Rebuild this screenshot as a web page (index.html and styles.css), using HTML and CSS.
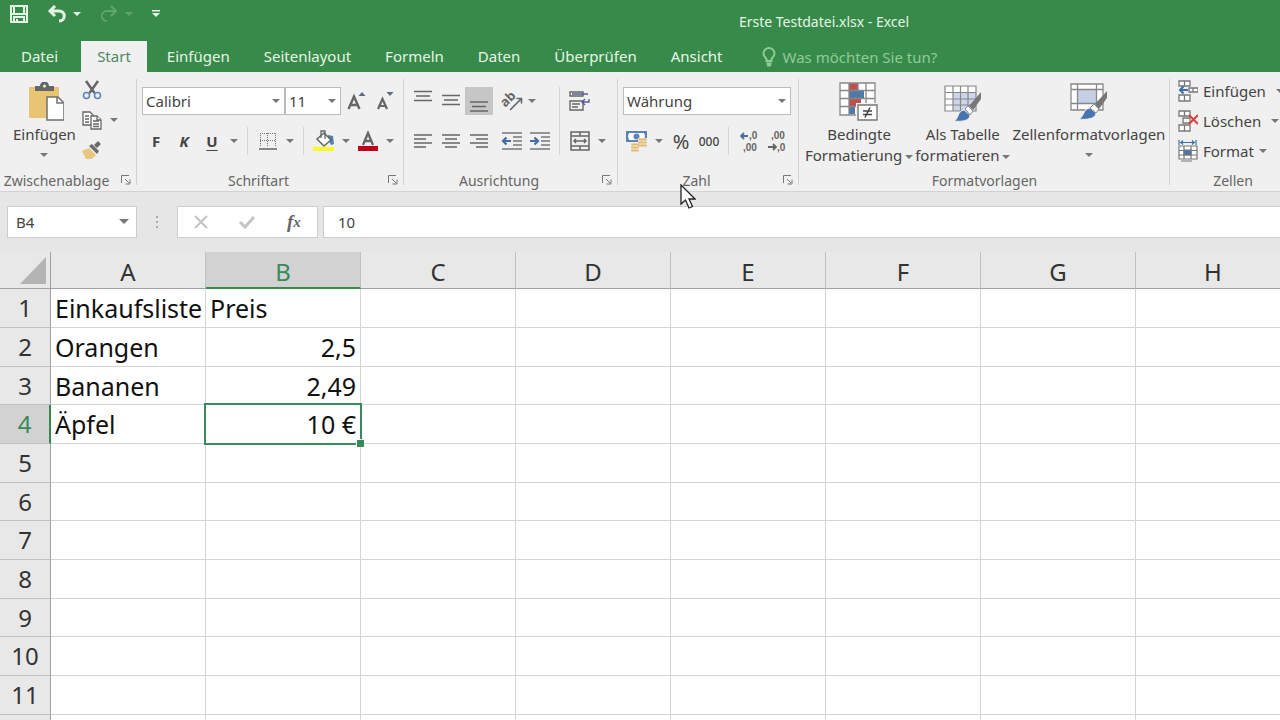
FILE: index.html
```
<!DOCTYPE html>
<html lang="de">
<head>
  <meta charset="UTF-8">
  <meta name="viewport" content="width=device-width, initial-scale=1.0">
  <title>Erste Testdatei.xlsx - Excel</title>
  <link rel="stylesheet" href="styles.css">
</head>
<body>
  <div class="app">
    <header class="titlebar">
      <div class="quick-access">
        <button class="qa-btn" aria-label="Speichern">
          <svg width="20" height="20" viewBox="0 0 20 20" fill="none" stroke="#e6f6e4" stroke-width="2"><path d="M2 2h16v16H2zM5 2v8M15 2v8M5 18v-5h10v5M8 15v3M2 10h16"/></svg>
        </button>
        <button class="qa-btn undo" aria-label="Rückgängig">
          <svg width="20" height="18" viewBox="0 0 20 18" fill="none" stroke="#e6f6e4" stroke-width="3"><path d="M8 1L3 6l5 5M3 6h9c7 0 7 10 0 10"/></svg>
          <span class="arrow"></span>
        </button>
        <button class="qa-btn redo" aria-label="Wiederholen" disabled>
          <svg width="20" height="18" viewBox="0 0 20 18" fill="none" stroke="#5fa56c" stroke-width="2"><path d="M12 1l5 5-5 5M17 6H8c-7 0-7 10 0 10"/></svg>
          <span class="arrow"></span>
        </button>
        <button class="qa-btn" aria-label="Symbolleiste anpassen">
          <svg width="10" height="10" viewBox="0 0 10 10"><path d="M1 1h8v1.500H1zM1 4h8L5 8z" fill="#e6f6e4"/></svg>
        </button>
      </div>
      <h1 class="doc-title">Erste Testdatei.xlsx - Excel</h1>
    </header>

    <nav class="tabs">
      <a class="tab file" href="#">Datei</a>
      <a class="tab active" href="#">Start</a>
      <a class="tab" href="#">Einfügen</a>
      <a class="tab" href="#">Seitenlayout</a>
      <a class="tab" href="#">Formeln</a>
      <a class="tab" href="#">Daten</a>
      <a class="tab" href="#">Überprüfen</a>
      <a class="tab" href="#">Ansicht</a>
      <button class="tell-me">
        <svg width="14" height="20" viewBox="0 0 14 20" fill="none" stroke="#8fcb95" stroke-width="2"><path d="M4.500 14v-2C3 10 1.500 9 1.500 6.500a5.500 5.500 0 0 1 11 0C12.500 9 11 10 9.500 12v2zM4.500 16.500h5M5 18.500h4"/></svg>
        Was möchten Sie tun?
      </button>
    </nav>

    <section class="ribbon">
      <!-- Zwischenablage -->
      <div class="group clipboard">
        <div class="group-body large">
          <button class="big-btn paste">
            <svg width="40" height="40" viewBox="0 0 40 40"><path d="M5 5h30v31H5z" fill="#e7c573"/><path d="M11 9V4h5a4.500 4.500 0 0 1 9 0h5v5z" fill="#666"/><circle cx="20.500" cy="4" r="1.500" fill="#eee"/><path d="M23 15h11l6 6v17H23z" fill="#fff" stroke="#707070" stroke-width="1.500"/><path d="M33 15v6h6" fill="none" stroke="#707070" stroke-width="1.500"/></svg>
            <span>Einfügen</span>
            <span class="arrow"></span>
          </button>
          <div class="small-stack">
            <button class="icon-btn" aria-label="Ausschneiden">
              <svg width="20" height="20" viewBox="0 0 20 20" fill="none"><path d="M4 1l8.500 12M16 1L7.500 13" stroke="#666" stroke-width="2.500"/><circle cx="4.500" cy="15.500" r="3" stroke="#5b83b5" stroke-width="1.500"/><circle cx="15.500" cy="15.500" r="3" stroke="#5b83b5" stroke-width="1.500"/></svg>
            </button>
            <div class="row">
              <button class="icon-btn" aria-label="Kopieren">
                <svg width="22" height="20" viewBox="0 0 22 20" fill="#fff" stroke="#666" stroke-width="1.300"><path d="M2 2h7l3 3v10H2z"/><path d="M4 6h4M4 9h4M4 12h4"/><path d="M10 6h6l4 4v9H10z"/><path d="M12 11h6M12 14h6M12 16.500h6M16 6v4h4"/></svg>
              </button>
              <button class="drop" aria-label="Kopieroptionen"><span class="arrow"></span></button>
            </div>
            <button class="icon-btn" aria-label="Format übertragen">
              <svg width="22" height="20" viewBox="0 0 22 20"><path d="M1 11l7-3 7 7-4 4H5z" fill="#e5c77d"/><path d="M8 6l3-2 7 7-2 3zM13 5l4-4 3 3-4 4z" fill="#6b6b6b"/></svg>
            </button>
          </div>
        </div>
        <div class="caption"><span>Zwischenablage</span>
          <button class="launcher" aria-label="Zwischenablage öffnen"><svg width="10" height="10" viewBox="0 0 10 10" fill="none" stroke="#777"><path d="M.5 8V.5H8M4 4l4 4M9 4.500V9H4.500"/></svg></button></div>
      </div>

      <!-- Schriftart -->
      <div class="group font">
        <div class="group-body">
          <div class="row">
            <div class="combo font-name"><select aria-label="Schriftart"><option>Calibri</option></select></div>
            <div class="combo font-size"><select aria-label="Schriftgrad"><option>11</option></select></div>
            <button class="icon-btn" aria-label="Schrift vergrößern">
              <svg width="20" height="20" viewBox="0 0 20 20"><path d="M1.500 18L7 5.500 12.500 18M4 14h6.500" fill="none" stroke="#666" stroke-width="2.400"/><path d="M11.500 5l3.500-4 3.500 4z" fill="#5b6b85"/></svg>
            </button>
            <button class="icon-btn" aria-label="Schrift verkleinern">
              <svg width="20" height="20" viewBox="0 0 20 20"><path d="M3 18L7.500 8 12 18M4.500 15h6" fill="none" stroke="#666" stroke-width="2.200"/><path d="M11.500 1l3.500 4 3.500-4z" fill="#5b6b85"/></svg>
            </button>
          </div>
          <div class="row">
            <button class="icon-btn bold">F</button>
            <button class="icon-btn italic">K</button>
            <button class="icon-btn underline">U</button>
            <button class="drop" aria-label="Unterstreichen"><span class="arrow"></span></button>
            <i class="sep"></i>
            <button class="icon-btn" aria-label="Rahmen">
              <svg width="20" height="20" viewBox="0 0 20 20" fill="none" stroke="#777"><path d="M2 2.500h16M2 9.500h16M2.500 2v14M9.500 2v14M17.500 2v14" stroke-dasharray="1 1"/><path d="M1 18h18" stroke="#666" stroke-width="1.500"/></svg>
            </button>
            <button class="drop" aria-label="Rahmenarten"><span class="arrow"></span></button>
            <i class="sep"></i>
            <button class="icon-btn" aria-label="Füllfarbe">
              <svg width="22" height="22" viewBox="0 0 22 22"><path d="M15 5l5 1 1 8-3 1-3-6z" fill="#5680aa"/><path d="M4 9l7-6 7 7-7 6z" fill="#fff" stroke="#666" stroke-width="1.500"/><path d="M8 8V1h4v8" fill="none" stroke="#666" stroke-width="1.300"/><path d="M0 17h21v4H0z" fill="#f8fb25"/></svg>
            </button>
            <button class="drop" aria-label="Füllfarben"><span class="arrow"></span></button>
            <button class="icon-btn" aria-label="Schriftfarbe">
              <svg width="22" height="22" viewBox="0 0 22 22"><path d="M6 15L11 3l5 12M8 11h6" fill="none" stroke="#666" stroke-width="2.300"/><path d="M1 16h20v5H1z" fill="#c00018"/></svg>
            </button>
            <button class="drop" aria-label="Schriftfarben"><span class="arrow"></span></button>
          </div>
        </div>
        <div class="caption"><span>Schriftart</span>
          <button class="launcher" aria-label="Schriftart öffnen"><svg width="10" height="10" viewBox="0 0 10 10" fill="none" stroke="#777"><path d="M.5 8V.5H8M4 4l4 4M9 4.500V9H4.500"/></svg></button></div>
      </div>

      <!-- Ausrichtung -->
      <div class="group align">
        <div class="group-body split">
          <div class="rows">
            <div class="row">
              <button class="icon-btn" aria-label="Oben ausrichten"><svg width="20" height="22" viewBox="0 0 20 22" stroke="#666" stroke-width="1.500"><path d="M1 1.500h18M3 6h14M1 10.500h18"/></svg></button>
              <button class="icon-btn" aria-label="Zentriert ausrichten"><svg width="20" height="22" viewBox="0 0 20 22" stroke="#666" stroke-width="1.500"><path d="M1 5.500h18M3 10h14M1 14.500h18"/></svg></button>
              <button class="icon-btn pressed" aria-label="Unten ausrichten"><svg width="20" height="22" viewBox="0 0 20 22" stroke="#666" stroke-width="1.500"><path d="M1 12h18M3 16.500h14M1 21h18"/></svg></button>
              <button class="icon-btn spaced" aria-label="Ausrichtung">
                <svg class="ab" width="24" height="22" viewBox="0 0 24 22"><text transform="translate(11 12) rotate(-45)" text-anchor="middle" class="ab-text">ab</text><path d="M10 20L21 9M16.500 8.500H21.500V13.500" fill="none" stroke="#666" stroke-width="1.600"/></svg>
              </button>
              <button class="drop narrow" aria-label="Drehrichtung"><span class="arrow"></span></button>
            </div>
            <div class="row">
              <button class="icon-btn" aria-label="Linksbündig"><svg width="20" height="16" viewBox="0 0 20 16" stroke="#666" stroke-width="1.500"><path d="M1 2h18M1 6h12M1 10h18M1 14h12"/></svg></button>
              <button class="icon-btn" aria-label="Zentriert"><svg width="20" height="16" viewBox="0 0 20 16" stroke="#666" stroke-width="1.500"><path d="M1 2h18M4 6h12M1 10h18M4 14h12"/></svg></button>
              <button class="icon-btn" aria-label="Rechtsbündig"><svg width="20" height="16" viewBox="0 0 20 16" stroke="#666" stroke-width="1.500"><path d="M1 2h18M7 6h12M1 10h18M7 14h12"/></svg></button>
              <button class="icon-btn spaced" aria-label="Einzug verkleinern"><svg width="22" height="18" viewBox="0 0 22 18" fill="none" stroke="#777" stroke-width="1.500"><path d="M1 1h20M12 5h9M12 9h9M12 13h9M1 17h20"/><path d="M10 9H2M5.500 5.500L2 9l3.500 3.500" stroke="#3f6ea5" stroke-width="2.200"/></svg></button>
              <button class="icon-btn" aria-label="Einzug vergrößern"><svg width="22" height="18" viewBox="0 0 22 18" fill="none" stroke="#777" stroke-width="1.500"><path d="M1 1h20M12 5h9M12 9h9M12 13h9M1 17h20"/><path d="M1 9h8M5.500 5.500L9 9l-3.500 3.500" stroke="#3f6ea5" stroke-width="2.200"/></svg></button>
            </div>
          </div>
          <i class="sep tall"></i>
          <div class="rows">
            <div class="row">
              <button class="icon-btn" aria-label="Textumbruch"><svg width="22" height="22" viewBox="0 0 22 22" fill="none" stroke="#666" stroke-width="1.400"><path d="M1 2h13v4H1zM1 11h13v9H1zM3 14h8M3 17h6"/><path d="M3 4h16M20 9v3h-7M16 9l-3 3 3 3" stroke="#5a5aa0"/></svg></button>
            </div>
            <div class="row">
              <button class="icon-btn" aria-label="Verbinden und zentrieren"><svg width="20" height="20" viewBox="0 0 20 20" fill="none" stroke="#666" stroke-width="1.500"><path d="M1 1h18v18H1zM1 5h18M1 15h18M10 1v4M10 15v4M4 10h12M6 8l-2 2 2 2M14 8l2 2-2 2"/></svg></button>
              <button class="drop" aria-label="Verbindungsarten"><span class="arrow"></span></button>
            </div>
          </div>
        </div>
        <div class="caption"><span>Ausrichtung</span>
          <button class="launcher" aria-label="Ausrichtung öffnen"><svg width="10" height="10" viewBox="0 0 10 10" fill="none" stroke="#777"><path d="M.5 8V.5H8M4 4l4 4M9 4.500V9H4.500"/></svg></button></div>
      </div>

      <!-- Zahl -->
      <div class="group number">
        <div class="group-body">
          <div class="row">
            <div class="combo format"><select aria-label="Zahlenformat"><option>Währung</option></select></div>
          </div>
          <div class="row">
            <button class="icon-btn" aria-label="Buchhaltungsformat"><svg width="22" height="22" viewBox="0 0 22 22"><path d="M0 1h21v11H0z" fill="#5b83b5"/><path d="M3 3h15l1 3-1 4H3L2 6z" fill="#fff"/><circle cx="10.500" cy="6.500" r="3" fill="#5b83b5"/><path d="M12 8h9v10h-9zM5 13h8v8H5z" fill="#f0f0f0"/><path d="M13 9.500h7M13 12.500h7M13 15.500h7M6 14.500h6M6 17.500h6M6 20.500h6" stroke="#dfba6b" stroke-width="2" stroke-linecap="round"/></svg></button>
            <button class="drop" aria-label="Währungen"><span class="arrow"></span></button>
            <button class="icon-btn percent">%</button>
            <button class="icon-btn thousand">000</button>
            <i class="sep"></i>
            <button class="icon-btn" aria-label="Dezimalstelle hinzufügen"><svg width="22" height="24" viewBox="0 0 22 24"><path d="M10 7H3M6 4L3 7l3 3" fill="none" stroke="#4c6c90" stroke-width="1.800"/><text class="dec" x="11" y="10">,0</text><text class="dec" x="5" y="22">,00</text></svg></button>
            <button class="icon-btn" aria-label="Dezimalstelle löschen"><svg width="22" height="24" viewBox="0 0 22 24"><path d="M2 18h8M7 15l3 3-3 3" fill="none" stroke="#666" stroke-width="1.800"/><text class="dec" x="5" y="10">,00</text><text class="dec" x="11" y="22">,0</text></svg></button>
          </div>
        </div>
        <div class="caption"><span>Zahl</span>
          <button class="launcher" aria-label="Zahl öffnen"><svg width="10" height="10" viewBox="0 0 10 10" fill="none" stroke="#777"><path d="M.5 8V.5H8M4 4l4 4M9 4.500V9H4.500"/></svg></button></div>
      </div>

      <!-- Formatvorlagen -->
      <div class="group styles">
        <div class="group-body large">
          <button class="big-btn">
            <svg width="40" height="40" viewBox="0 0 40 40"><path d="M1 1h35v32H1z" fill="#fff"/><path d="M10 1h9v7h-9zM10 17h12v7H10z" fill="#c0504d"/><path d="M10 9h15v7H10zM10 25h6v7h-6z" fill="#4f79a8"/><path d="M1 1h35v32H1zM1 8.500h35M1 16.500h35M1 24.500h35M10 1v32M19 1v8M27 1v32" fill="none" stroke="#888" stroke-width="1.300"/><path d="M17 21h23v19H17z" fill="#f0f0f0"/><path d="M19 23h19v15H19z" fill="#fff" stroke="#777" stroke-width="1.400"/><path d="M24 29h9M24 32.500h9M31 25.500l-5 10" stroke="#444" stroke-width="1.500"/></svg>
            <span>Bedingte</span>
            <span>Formatierung<span class="arrow"></span></span>
          </button>
          <button class="big-btn">
            <svg width="40" height="40" viewBox="0 0 40 40"><path d="M2 4h31v25H2z" fill="#fff"/><path d="M10 11h23v18H10z" fill="#cdd5ea"/><path d="M2 4h31v25H2zM2 10.500h31M2 17h31M2 23h31M10 4v25M17.500 4v25M25 4v25" fill="none" stroke="#888" stroke-width="1.200"/><path d="M11 39c5-2 3-10 10-11l6 5c0 6-9 7-16 6z" fill="#4675b0" stroke="#f0f0f0"/><path d="M22 27l3-3 5 5-3 4z" fill="#fff" stroke="#888"/><path d="M26 24l12-14v7l-8 11z" fill="#777"/></svg>
            <span>Als Tabelle</span>
            <span>formatieren<span class="arrow"></span></span>
          </button>
          <button class="big-btn">
            <svg width="40" height="40" viewBox="0 0 40 40"><path d="M2 2h32v26H2z" fill="#fff"/><path d="M9 8h18v13H9z" fill="#c5d0e4"/><path d="M2 2h32v26H2zM2 7.500h32M2 21.500h32M8.500 2v26M27.500 2v26" fill="none" stroke="#888" stroke-width="1.300"/><path d="M10 37c5-2 4-10 11-11l6 5c0 6-10 7-17 6z" fill="#4675b0" stroke="#f0f0f0"/><path d="M21 26l4-4 5 5-3 4z" fill="#fff" stroke="#888"/><path d="M26 22l12-13v7l-8 11z" fill="#777"/></svg>
            <span>Zellenformatvorlagen</span>
            <span class="arrow"></span>
          </button>
        </div>
        <div class="caption"><span>Formatvorlagen</span></div>
      </div>

      <!-- Zellen -->
      <div class="group cells">
        <div class="cell-actions">
          <div class="row">
            <button class="text-btn"><svg width="20" height="22" viewBox="0 0 20 22" fill="#fff" stroke="#777" stroke-width="1.300"><path d="M1 1h11v5H1zM6.500 1v5M1 15h11v6H1zM6.500 15v6M11 8h9v4h-9zM15 8v4"/><path d="M10 10H2M5.500 6.500L2 10l3.500 3.500" fill="none" stroke="#3f6ea5" stroke-width="2"/></svg>Einfügen</button>
            <button class="drop" aria-label="Einfügeoptionen"><span class="arrow"></span></button>
          </div>
          <div class="row">
            <button class="text-btn"><svg width="20" height="22" viewBox="0 0 20 22" fill="#fff" stroke="#777" stroke-width="1.300"><path d="M1 1h11v5H1zM6.500 1v5M1 15h11v6H1zM6.500 15v6M5 8h7v5H5z"/><path d="M11 5l9 9M20 5l-9 9" stroke="#d8423c" stroke-width="2"/></svg>Löschen</button>
            <button class="drop" aria-label="Löschoptionen"><span class="arrow"></span></button>
          </div>
          <div class="row">
            <button class="text-btn"><svg width="20" height="22" viewBox="0 0 20 22" fill="#fff" stroke="#777" stroke-width="1.200"><path d="M1 6h18v13H1zM1 10.500h18M1 15h18M6 6v13M13 6v13M3 21h11"/><path d="M6 10h7v5H6z" fill="#4675b0"/><path d="M1 0v5M18 0v5M2 2.500h15M5 .5l-2 2 2 2M14 .5l2 2-2 2" fill="none" stroke="#3f6ea5"/></svg>Format<span class="arrow"></span></button>
          </div>
        </div>
        <div class="caption"><span>Zellen</span></div>
      </div>
    </section>

    <div class="formula-bar">
      <div class="name-box">
        <input type="text" value="B4" aria-label="Namenfeld">
        <button class="drop" aria-label="Namen anzeigen"><span class="arrow wide"></span></button>
      </div>
      <div class="dots"><i></i><i></i><i></i></div>
      <div class="edit-buttons">
        <button aria-label="Abbrechen"><svg width="16" height="16" viewBox="0 0 16 16"><path d="M2 2l12 12M14 2L2 14" stroke="#c4c4c4" stroke-width="2"/></svg></button>
        <button aria-label="Eingeben"><svg width="18" height="16" viewBox="0 0 18 16"><path d="M2 8l5 5L16 3" fill="none" stroke="#c4c4c4" stroke-width="3"/></svg></button>
        <button class="fx" aria-label="Funktion einfügen">f<small>x</small></button>
      </div>
      <input class="formula" type="text" value="10" aria-label="Bearbeitungsleiste">
    </div>

    <main class="sheet">
      <table class="cells-table">
        <thead>
          <tr>
            <th class="corner"><svg width="26" height="27" viewBox="0 0 26 27"><path d="M26 0v27H0z" fill="#b4b4b4"/></svg></th>
            <th>A</th><th class="current">B</th><th>C</th><th>D</th><th>E</th><th>F</th><th>G</th><th>H</th>
          </tr>
        </thead>
        <tbody>
          <tr><th>1</th><td>Einkaufsliste</td><td>Preis</td><td></td><td></td><td></td><td></td><td></td><td></td></tr>
          <tr><th>2</th><td>Orangen</td><td class="num">2,5</td><td></td><td></td><td></td><td></td><td></td><td></td></tr>
          <tr><th>3</th><td>Bananen</td><td class="num">2,49</td><td></td><td></td><td></td><td></td><td></td><td></td></tr>
          <tr><th class="current">4</th><td>Äpfel</td><td class="num selected">10 €<span class="handle"></span></td><td></td><td></td><td></td><td></td><td></td><td></td></tr>
          <tr><th>5</th><td></td><td></td><td></td><td></td><td></td><td></td><td></td><td></td></tr>
          <tr><th>6</th><td></td><td></td><td></td><td></td><td></td><td></td><td></td><td></td></tr>
          <tr><th>7</th><td></td><td></td><td></td><td></td><td></td><td></td><td></td><td></td></tr>
          <tr><th>8</th><td></td><td></td><td></td><td></td><td></td><td></td><td></td><td></td></tr>
          <tr><th>9</th><td></td><td></td><td></td><td></td><td></td><td></td><td></td><td></td></tr>
          <tr><th>10</th><td></td><td></td><td></td><td></td><td></td><td></td><td></td><td></td></tr>
          <tr><th>11</th><td></td><td></td><td></td><td></td><td></td><td></td><td></td><td></td></tr>
          <tr><th></th><td></td><td></td><td></td><td></td><td></td><td></td><td></td><td></td></tr>
        </tbody>
      </table>
    </main>

    <svg class="pointer" width="16" height="26" viewBox="0 0 16 26"><path d="M1 1v19l4.500-4 3.500 8 3.500-1.500L9 15h6z" fill="#fff" stroke="#222" stroke-width="1.300"/></svg>
  </div>
</body>
</html>
```
FILE: styles.css
```
* {
  box-sizing: border-box;
}

body {
  margin: 0;
  font-family: "Noto Sans", "Open Sans", sans-serif;
  font-size: 15px;
  color: #444;
  background: #e6e6e6;
}

button {
  font: inherit;
  color: inherit;
  background: none;
  border: none;
  padding: 0;
}

select,
input {
  font: inherit;
  color: inherit;
}

svg {
  display: block;
  flex: none;
}

.app {
  position: relative;
  display: flex;
  flex-direction: column;
  height: 100vh;
  overflow: hidden;
}

.arrow {
  display: inline-block;
  flex: none;
  border: 4px solid transparent;
  border-top-color: #777;
  border-bottom: none;
}

.arrow.wide {
  border-width: 5px;
  border-bottom: none;
}

/* Title bar */
.titlebar {
  display: grid;
  grid-template-columns: 1fr auto 1fr;
  height: 41px;
  flex: none;
  background: #388a4b;
  color: #e6f6e4;
}

.quick-access {
  display: flex;
  align-items: center;
  gap: 18px;
  height: 28px;
  padding-left: 9px;
}

.qa-btn {
  display: flex;
  align-items: center;
  gap: 6px;
}

.qa-btn .arrow {
  border-top-color: #e6f6e4;
}

.qa-btn.redo .arrow {
  border-top-color: #5fa56c;
}

.doc-title {
  grid-column: 2;
  margin: 0;
  padding: 12px 0 0;
  font-size: 14px;
  line-height: 20px;
  font-weight: normal;
  margin-left: 368px;
}

/* Tabs */
.tabs {
  display: flex;
  height: 31px;
  flex: none;
  background: #388a4b;
  color: #e6f6e4;
  white-space: nowrap;
}

.tab {
  padding: 0 17px;
  line-height: 31px;
  color: inherit;
  text-decoration: none;
}

.tab.file {
  padding: 0 23px 0 21px;
}

.tab.active {
  padding: 0 16px;
  margin-right: 3px;
  background: #f0f0f0;
  color: #4d8762;
}

.tell-me {
  display: flex;
  align-items: center;
  gap: 7px;
  padding-left: 22px;
  color: #8fcb95;
}

/* Ribbon */
.ribbon {
  display: flex;
  height: 120px;
  flex: none;
  background: #f0f0f0;
  border-bottom: 1px solid #d2d2d2;
  overflow: hidden;
  white-space: nowrap;
}

.group {
  position: relative;
  display: flex;
  flex-direction: column;
  justify-content: space-between;
  flex: none;
}

.group::after {
  content: "";
  position: absolute;
  top: 7px;
  right: 0;
  bottom: 6px;
  width: 1px;
  background: #d2d2d2;
}

.clipboard { width: 137px; }
.font { width: 267px; }
.align { width: 214px; }
.number { width: 181px; }
.styles { width: 371px; }
.cells { width: 126px; }

.group-body {
  display: flex;
  flex-direction: column;
  gap: 12px;
  padding: 15px 0 0 5px;
}

.group-body.split {
  flex-direction: row;
  gap: 0;
}

.group-body.large {
  flex-direction: row;
  gap: 2px;
  padding-top: 10px;
}

.rows {
  display: flex;
  flex-direction: column;
  gap: 12px;
}

.row {
  display: flex;
  align-items: center;
}

.icon-btn {
  display: flex;
  align-items: center;
  justify-content: center;
  width: 28px;
  height: 28px;
  flex: none;
}

.icon-btn.pressed {
  background: #c6c6c6;
}

.icon-btn.spaced {
  margin-left: 5px;
}

.drop {
  display: flex;
  align-items: center;
  justify-content: center;
  width: 16px;
  height: 28px;
  flex: none;
}

.drop.narrow {
  width: 12px;
}

.sep {
  width: 1px;
  height: 28px;
  margin: 0 6px 0 5px;
  background: #d6d6d6;
}

.sep.tall {
  height: 68px;
}

.bold,
.italic,
.underline {
  font-weight: bold;
}

.italic {
  font-style: italic;
}

.underline {
  text-decoration: underline;
  text-underline-offset: 3px;
}

.percent {
  font-size: 20px;
}

.thousand {
  font-size: 12px;
  font-weight: 500;
}

.dec {
  font: bold 10px "Liberation Sans", sans-serif;
  fill: #666;
}

.ab {
  overflow: visible;
}

.ab-text {
  font: bold 13px "Noto Sans", sans-serif;
  fill: #666;
}

.combo {
  position: relative;
  height: 28px;
}

.combo select {
  width: 100%;
  height: 100%;
  padding: 0 3px;
  appearance: none;
  background: #fff;
  border: 1px solid #bcbcbc;
  border-radius: 0;
}

.combo::after {
  content: "";
  position: absolute;
  top: 12px;
  right: 5px;
  border: 4px solid transparent;
  border-top-color: #777;
  border-bottom: none;
  pointer-events: none;
}

.font-name { width: 143px; }
.font-size { width: 56px; margin-right: 2px; }
.format { width: 168px; }

.big-btn {
  display: flex;
  flex-direction: column;
  align-items: center;
  line-height: 21px;
}

.big-btn svg {
  margin-bottom: 2px;
}

.big-btn > .arrow {
  margin-top: 8px;
}

.big-btn span .arrow {
  margin-left: 3px;
  vertical-align: 2px;
}

.clipboard .group-body {
  padding-left: 13px;
}

.small-stack {
  display: flex;
  flex-direction: column;
  gap: 2px;
  margin-top: -6px;
}

.styles .group-body {
  padding-left: 6px;
}

.cell-actions {
  padding: 4px 0 0 8px;
}

.cell-actions .row {
  height: 30px;
}

.text-btn {
  display: flex;
  align-items: center;
  gap: 5px;
}

.cell-actions .drop {
  width: 28px;
}

.caption {
  display: flex;
  align-items: center;
  height: 20px;
  margin-bottom: 1px;
  font-size: 14px;
  color: #666;
}

.caption span {
  flex: 1;
  text-align: center;
}

.launcher {
  width: 24px;
  padding-left: 8px;
}

/* Formula bar */
.formula-bar {
  display: flex;
  height: 60px;
  flex: none;
  padding: 14px 0 14px 7px;
  font-size: 15px;
}

.name-box {
  display: flex;
  width: 130px;
  background: #fff;
  border: 1px solid #cdcdcd;
}

.name-box input {
  flex: 1;
  min-width: 0;
  padding: 0 8px;
  border: none;
  background: none;
}

.name-box .drop {
  width: 24px;
}

.dots {
  display: flex;
  flex-direction: column;
  align-items: center;
  justify-content: center;
  gap: 3px;
  width: 40px;
}

.dots i {
  width: 2px;
  height: 2px;
  background: #aaa;
}

.edit-buttons {
  display: flex;
  width: 141px;
  margin-right: 5px;
  background: #fff;
  border: 1px solid #cdcdcd;
}

.edit-buttons button {
  display: flex;
  flex: 1;
  align-items: center;
  justify-content: center;
}

.edit-buttons .fx {
  font: italic bold 19px "Liberation Serif", serif;
  color: #666;
}

.fx small {
  font-size: 15px;
}

.formula {
  flex: 1;
  min-width: 0;
  padding: 0 14px;
  border: 1px solid #cdcdcd;
  border-right: none;
  background: #fff;
}

/* Sheet */
.sheet {
  flex: 1;
  overflow: hidden;
}

.cells-table {
  width: max-content;
  border-collapse: separate;
  border-spacing: 0;
  table-layout: fixed;
  background: #fff;
  color: #111;
  font-size: 25px;
  line-height: 28px;
}

.cells-table th {
  width: 155px;
  padding: 0;
  font-size: 24px;
  font-weight: normal;
  color: #333;
  background: #e8e8e8;
  border-right: 1px solid #c0c0c0;
  border-bottom: 1px solid #c0c0c0;
}

.cells-table thead th {
  height: 37px;
  padding-top: 4px;
  border-bottom-color: #a0a0a0;
}

.cells-table th:first-child {
  width: 51px;
  border-right-color: #a0a0a0;
}

.cells-table thead .corner {
  padding: 0 0 0 20px;
}

.cells-table td {
  height: 39px;
  padding: 0 2px 0 4px;
  border-right: 1px solid #d4d4d4;
  border-bottom: 1px solid #d4d4d4;
}

.cells-table tbody tr:nth-child(3n) td {
  height: 38px;
}

.cells-table .num {
  padding-right: 4px;
  text-align: right;
}

.cells-table th.current {
  background: #d2d2d2;
  color: #388a5b;
}

.cells-table thead th.current {
  border-bottom: 2px solid #388a4b;
}

.cells-table tbody th.current {
  border-right: 2px solid #388a4b;
}

.selected {
  position: relative;
}

.selected::after {
  content: "";
  position: absolute;
  inset: -2px;
  border: 2px solid #388a5b;
}

.handle {
  position: absolute;
  right: -4px;
  bottom: -4px;
  z-index: 1;
  width: 8px;
  height: 8px;
  background: #388a5b;
  border: 1px solid #fff;
  border-right: none;
  border-bottom: none;
}

.pointer {
  position: absolute;
  left: 680px;
  top: 184px;
}
```
